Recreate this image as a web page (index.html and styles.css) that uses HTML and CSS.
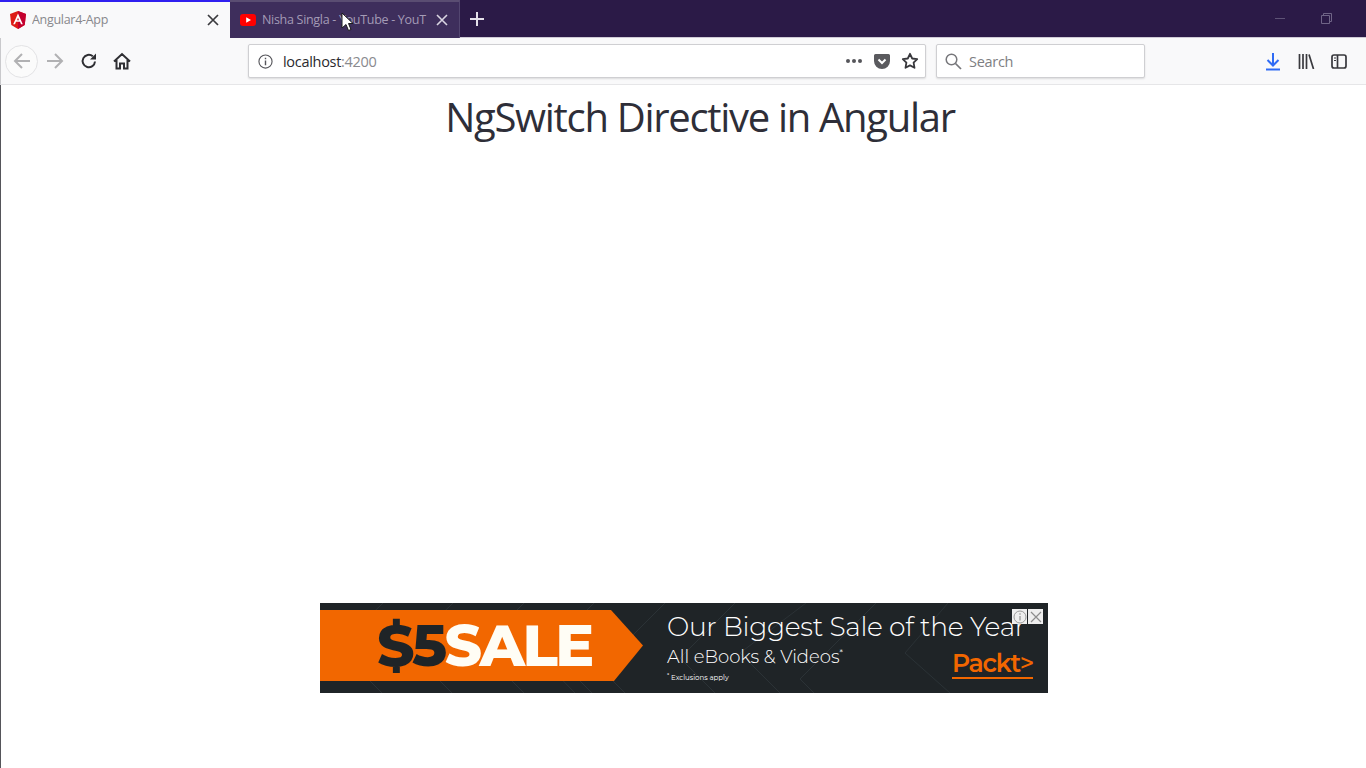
FILE: index.html
```html
<!DOCTYPE html>
<html lang="en">
<head>
<meta charset="utf-8">
<title>Angular4-App</title>
<link rel="stylesheet" href="styles.css">
</head>
<body>
<div class="tabbar">
  <div class="tab active">
    <svg class="favicon" viewBox="0 0 16 18"><path d="M8 0 0 3l1.3 11L8 18l6.7-4L16 3z" fill="#dd1b16"/><path d="M8 0v18l6.7-4L16 3z" fill="#c3002f"/><path d="M8 2.5 3.2 13.2H5l1-2.4h4l1 2.4h1.8zM7 9.2l1-2.4 1 2.4z" fill="#fff"/></svg>
    <span class="tab-title dark">Angular4-App</span>
    <svg class="close" viewBox="0 0 12 12"><path d="M1 1l10 10M11 1 1 11" stroke="#3a3a3e" stroke-width="1.7"/></svg>
  </div>
  <div class="tab inactive">
    <svg class="favicon yt" viewBox="0 0 16 12"><rect width="16" height="12" rx="3" fill="#f00"/><path d="M6.2 3.2v5.6L11 6z" fill="#fff"/></svg>
    <span class="tab-title light">Nisha Singla - YouTube - YouT</span>
    <svg class="close" viewBox="0 0 12 12"><path d="M1 1l10 10M11 1 1 11" stroke="#d9d5e2" stroke-width="1.6"/></svg>
    <svg class="cursor" viewBox="0 0 12 20"><path d="M1 1v15l4-3.5 2.5 6 2.5-1-2.5-6H12z" fill="#fff" stroke="#1c1c1c" stroke-width="1"/></svg>
  </div>
  <svg class="newtab" viewBox="0 0 14 14"><path d="M7 0v14M0 7h14" stroke="#e4e0ea" stroke-width="2"/></svg>
  <div class="window-controls">
    <span class="minimize"></span>
    <svg class="restore" viewBox="0 0 11 11"><path d="M.5 2.5h8v8h-8zM2.5 2.5v-2h8v8h-2" fill="none" stroke="#6f6486"/></svg>
  </div>
</div>
<div class="toolbar">
  <div class="nav">
    <div class="back">
      <svg class="icon18" viewBox="0 0 18 18"><path d="M17 9H2M9 2 2 9l7 7" fill="none" stroke="#b1b1b3" stroke-width="2"/></svg>
    </div>
    <svg class="icon18 forward" viewBox="0 0 18 18"><path d="M1 9h15M9 2l7 7-7 7" fill="none" stroke="#b1b1b3" stroke-width="2"/></svg>
    <svg class="icon18 reload" viewBox="0 0 18 18"><path d="M15 9.5A6.2 6.2 0 1 1 12.8 4.300" fill="none" stroke="#2f2f33" stroke-width="2"/><path d="M16 1.500V7.500H10z" fill="#2f2f33"/></svg>
    <svg class="icon18 home" viewBox="0 0 18 18"><path d="M1 9.500 9 2l8 7.500M3.500 8v8.500h3.500v-5h4v5h3.500V8" fill="none" stroke="#2f2f33" stroke-width="2"/></svg>
  </div>
  <div class="urlbar">
    <svg class="info" viewBox="0 0 16 16"><circle cx="8" cy="8" r="7" fill="none" stroke="#55555a" stroke-width="1.200"/><path d="M8 7v5M8 4v1.600" stroke="#55555a" stroke-width="1.500"/></svg>
    <span class="url">localhost<span class="port">:4200</span></span>
    <div class="url-actions">
      <span class="dots"><i></i><i></i><i></i></span>
      <svg class="pocket" viewBox="0 0 16 15"><path d="M1.500 0h13A1.500 1.500 0 0 1 16 1.500V7A8 8 0 0 1 0 7V1.500A1.500 1.500 0 0 1 1.500 0z" fill="#5a5a5e"/><path d="M4.500 5.500 8 9l3.500-3.500" fill="none" stroke="#fff" stroke-width="2"/></svg>
      <svg class="star" viewBox="0 0 18 18"><path d="M9 1.800l2.200 4.700 5 .7-3.600 3.500.9 5.100L9 13.400l-4.500 2.400.9-5.100L1.800 7.200l5-.7z" fill="none" stroke="#38383c" stroke-width="1.800" stroke-linejoin="round"/></svg>
    </div>
  </div>
  <div class="searchbar">
    <svg class="search-icon" viewBox="0 0 17 17"><circle cx="6.500" cy="6.500" r="5.300" fill="none" stroke="#77777b" stroke-width="1.500"/><path d="M10.500 10.500 16 16" stroke="#77777b" stroke-width="1.700"/></svg>
    <span class="search-text">Search</span>
  </div>
  <div class="tools">
    <svg class="download" viewBox="0 0 16 19"><path d="M8 1v12M2.500 8 8 13.500 13.500 8" fill="none" stroke="#2f6bf5" stroke-width="2"/><path d="M1 17.500h14" stroke="#2f6bf5" stroke-width="2"/></svg>
    <svg class="library" viewBox="0 0 17 15"><path d="M1.500 0v15M5 0v15M8.500 0v15M11 .500 15.500 15" stroke="#3a3a3e" stroke-width="1.700" fill="none"/></svg>
    <svg class="sidebar" viewBox="0 0 16 15"><rect x="1" y="1" width="14" height="13" rx="2" fill="none" stroke="#38383c" stroke-width="1.700"/><path d="M6.500 1v13" stroke="#38383c" stroke-width="1.700"/><path d="M3 4h2M3 6.500h2" stroke="#38383c"/></svg>
  </div>
</div>
<main class="page">
  <h1 class="heading">NgSwitch Directive in Angular</h1>
  <div class="ad">
    <svg class="ad-lines" viewBox="0 0 728 90"><path d="M63 0 30 32M133 0 100 32M204 0 180 24M274 0 220 54 255 90M345 0 280 65 305 90M415 0 360 55 395 90M486 0 420 50 460 90M556 0 480 76 494 90M628 0 585 50 630 90M62 90 40 68M132 90 110 68M204 90 182 68M272 90 250 68" fill="none" stroke="#2b3236"/></svg>
    <div class="ribbon"><span class="five">$5</span><span class="sale">SALE</span></div>
    <div class="ad-copy">
      <div class="ad-title">Our Biggest Sale of the Year</div>
      <div class="ad-sub">All eBooks &amp; Videos<sup>*</sup></div>
      <div class="ad-note"><sup>*</sup> Exclusions apply</div>
    </div>
    <div class="packt">Packt<span class="chev">&gt;</span></div>
    <div class="ad-badges">
      <span class="badge"><svg viewBox="0 0 14 14"><circle cx="7" cy="7" r="6" fill="none" stroke="#9a9a9a"/><path d="M7 6v4.500M7 3.300v1.400" stroke="#9a9a9a" stroke-width="1.300"/></svg></span>
      <span class="badge"><svg viewBox="0 0 14 14"><path d="M2 2l10 10M12 2 2 12" stroke="#8c8c8c" stroke-width="1.200"/></svg></span>
    </div>
  </div>
</main>
</body>
</html>
```
FILE: styles.css
```css
* { box-sizing: border-box; }
html, body { margin: 0; height: 100%; overflow: hidden; }
body {
  width: 1366px;
  height: 768px;
  display: flex;
  flex-direction: column;
  background: #fff;
  font-family: "Open Sans", "Noto Sans", sans-serif;
}

.tabbar {
  height: 38px;
  flex: none;
  display: flex;
  align-items: center;
  background: #2b1a47;
  border-bottom: 1px solid #cfcad6;
}
.tab {
  width: 230px;
  height: 38px;
  display: flex;
  align-items: center;
  position: relative;
  flex: none;
}
.tab.active {
  background: #f9f9fa;
  border-top: 2px solid #2f1ff0;
  padding: 0 11px 0 10px;
}
.tab.inactive {
  background: #3e2e5c;
  border-top: 2px solid #5a4d72;
  border-right: 1px solid #534670;
  padding: 0 11px 0 10px;
}
.favicon { width: 16px; height: 18px; flex: none; }
.favicon.yt { height: 12px; }
.tab-title {
  flex: 1;
  font-size: 12.500px;
  letter-spacing: -.3px;
  margin-left: 6px;
  white-space: nowrap;
  overflow: hidden;
}
.tab-title.dark { color: #88888c; }
.tab-title.light { color: #a49bb6; }
.close { width: 12px; height: 12px; flex: none; margin-left: 8px; }
.cursor { position: absolute; left: 111px; top: 10px; width: 12px; height: 20px; }
.newtab { width: 14px; height: 14px; margin-left: 10px; }
.window-controls {
  margin-left: auto;
  display: flex;
  align-items: center;
  gap: 36px;
  padding-right: 34px;
}
.minimize { width: 10px; height: 1px; background: #5e5376; }
.restore { width: 11px; height: 11px; }

.toolbar {
  height: 47px;
  flex: none;
  display: flex;
  align-items: center;
  background: #f9f9fa;
  border-bottom: 1px solid #e6e6e8;
  border-left: 1px solid #c9c9cc;
}
.nav {
  width: 247px;
  display: flex;
  align-items: center;
  flex: none;
  padding-left: 4px;
}
.back {
  width: 33px;
  height: 33px;
  border-radius: 50%;
  border: 1px solid #e3e3e5;
  background: #fbfbfb;
  display: flex;
  align-items: center;
  justify-content: center;
}
.icon18 { width: 18px; height: 18px; flex: none; }
.forward { margin-left: 8px; }
.reload { margin-left: 16px; }
.home { margin-left: 15px; }
.urlbar {
  width: 678px;
  height: 34px;
  background: #fff;
  border: 1px solid #cfcfd2;
  border-radius: 2px;
  box-shadow: 0 1px 2px rgba(0,0,0,.12);
  display: flex;
  align-items: center;
  padding: 0 6px 0 9px;
  flex: none;
}
.info { width: 15px; height: 15px; flex: none; }
.url {
  margin-left: 10px;
  font-size: 14.500px;
  letter-spacing: -.3px;
  color: #2a2a2e;
}
.port { color: #8a8a8e; }
.url-actions { margin-left: auto; display: flex; align-items: center; }
.dots { display: flex; gap: 2px; }
.dots i { width: 4px; height: 4px; border-radius: 50%; background: #55555a; }
.pocket { width: 16px; height: 15px; margin-left: 12px; }
.star { width: 18px; height: 18px; margin-left: 11px; }
.searchbar {
  width: 209px;
  height: 34px;
  margin-left: 10px;
  background: #fff;
  border: 1px solid #cfcfd2;
  border-radius: 2px;
  box-shadow: 0 1px 2px rgba(0,0,0,.12);
  display: flex;
  align-items: center;
  padding-left: 8px;
  flex: none;
}
.search-icon { width: 17px; height: 17px; flex: none; }
.search-text {
  margin-left: 7px;
  font-size: 14.500px;
  letter-spacing: -.3px;
  color: #7e7e82;
}
.tools {
  display: flex;
  align-items: center;
  margin-left: 120px;
}
.download { width: 16px; height: 19px; }
.library { width: 17px; height: 15px; margin-left: 17px; }
.sidebar { width: 16px; height: 15px; margin-left: 16px; }

.page {
  flex: 1;
  display: flex;
  flex-direction: column;
  align-items: center;
  border-left: 1px solid #55555a;
  position: relative;
}
.heading {
  margin: 7px 0 0 33px;
  font-family: "Open Sans", sans-serif;
  font-size: 40px;
  line-height: 50px;
  font-weight: 400;
  letter-spacing: -1.300px;
  color: #2e2e38;
  white-space: nowrap;
}
.ad {
  position: absolute;
  left: 319px;
  top: 518px;
  width: 728px;
  height: 90px;
  background: #1f2427;
  overflow: hidden;
  font-family: "Montserrat", "Inter", "Lato", sans-serif;
  color: #fff;
}
.ad-lines { position: absolute; inset: 0; width: 100%; height: 100%; }
.ribbon {
  position: absolute;
  left: 0;
  top: 7px;
  width: 323px;
  height: 71px;
  background: #f26700;
  clip-path: polygon(0 0, 291px 0, 100% 50%, 294px 100%, 0 100%);
  display: flex;
  align-items: center;
  padding-left: 57px;
  font-size: 58px;
  font-weight: 800;
  letter-spacing: -2.600px;
  line-height: 71px;
}
.five { color: #1f2427; }
.sale { color: #fffdf5; }
.ad-copy {
  position: absolute;
  left: 347px;
  top: 7px;
  font-weight: 300;
}
.ad-title { font-size: 26.500px; line-height: 34px; white-space: nowrap; letter-spacing: -.3px; }
.ad-sub { font-size: 18px; line-height: 24px; margin-top: 1px; white-space: nowrap; }
.ad-sub sup { font-size: 9px; line-height: 0; }
.ad-note { font-size: 7px; line-height: 10px; margin-top: 4px; white-space: nowrap; font-weight: 400; }
.ad-note sup { line-height: 0; }
.packt {
  position: absolute;
  left: 632px;
  top: 46px;
  font-size: 25px;
  line-height: 28px;
  font-weight: 600;
  letter-spacing: -1.200px;
  color: #f26700;
  border-bottom: 2px solid #f26700;
}
.chev { font-weight: 500; }
.ad-badges {
  position: absolute;
  top: 6px;
  right: 5px;
  display: flex;
  gap: 1px;
}
.badge {
  width: 15px;
  height: 15px;
  background: #eeeeee;
  display: flex;
  align-items: center;
  justify-content: center;
}
.badge svg { width: 14px; height: 14px; }
```
